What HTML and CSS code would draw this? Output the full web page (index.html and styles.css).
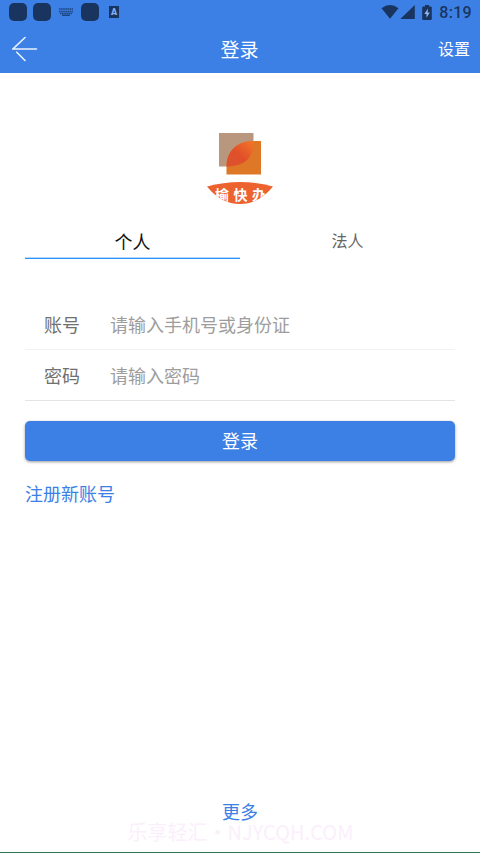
FILE: index.html
```html
<!DOCTYPE html>
<html lang="zh-CN">
<head>
<meta charset="utf-8">
<title>登录</title>
<link rel="stylesheet" href="styles.css">
</head>
<body>
<div class="screen">
  <header class="top">
    <div class="status">
      <div class="status-left">
        <span class="app"></span>
        <span class="app"></span>
        <svg class="keyboard" width="14" height="8" viewBox="0 0 14 8" stroke="#1c4680" stroke-width="1.5" fill="none"><path d="M0 1h14M0 3.4h14" stroke-dasharray="1.6 .5"/><path d="M1 5.4h12" stroke-dasharray="1.6 .5"/><path d="M3 7.3h8"/></svg>
        <span class="app"></span>
        <span class="ime"><b>A</b></span>
      </div>
      <div class="status-right">
        <svg width="18" height="14" viewBox="0 0 18 14"><path d="M0.500 3.300Q9-3.300 17.500 3.300L9 13.800Z" fill="#19355f"/></svg>
        <svg class="signal" width="15" height="14" viewBox="0 0 15 14"><path d="M14.800 0V14H0.300Z" fill="#19355f"/></svg>
        <svg class="battery" width="10" height="15" viewBox="0 0 10 15"><path d="M3 0h4v1.600h1.800q1 0 1 1V14q0 1-1 1H1.200q-1 0-1-1V2.600q0-1 1-1H3Z" fill="#19355f"/><path d="M6 3.600L2.300 8.900h2.200v3.900L7.800 7.500H5.600Z" fill="#8db5f2"/></svg>
        <span class="clock">8:19</span>
      </div>
    </div>
    <nav class="bar">
      <svg class="back" width="26" height="26" viewBox="0 0 26 26" fill="none" stroke="#e9f1ff" stroke-width="1.600" stroke-linecap="round"><path d="M13 1.500L1 13H24.500M4.800 16.200L13 24.500"/></svg>
      <h1>登录</h1>
      <span class="settings">设置</span>
    </nav>
  </header>
  <main>
    <svg class="logo" width="68" height="74" viewBox="0 0 68 74">
      <defs>
        <linearGradient id="leaf" x1="0" y1="1" x2="1" y2="0"><stop offset="0" stop-color="#d9532e"/><stop offset=".45" stop-color="#e04f2a"/><stop offset="1" stop-color="#f37826"/></linearGradient>
        <clipPath id="bowl"><path d="M1 56.500Q34 47.500 67 56.500Q53 74 34 74Q15 74 1 56.500Z"/></clipPath>
      </defs>
      <rect x="13" y="3" width="34.500" height="33.500" fill="#b9977f"/>
      <path d="M20.500 44.500V36C20.500 22 31 11 47.500 11H55V44.500Z" fill="#df7826"/>
      <path d="M20.500 36.500C20.500 21 31 11 47.500 11C48.500 28 38 36.500 20.500 36.500Z" fill="url(#leaf)"/>
      <g clip-path="url(#bowl)">
        <rect y="50" width="68" height="24" fill="#ed6330"/>
        <text class="logo-text" x="9" y="70">榆</text>
        <text class="logo-text" x="27.500" y="70">快</text>
        <text class="logo-text" x="46" y="70">办</text>
      </g>
    </svg>
    <div class="tabs">
      <div class="tab active">个人</div>
      <div class="tab">法人</div>
    </div>
    <form class="form">
      <label class="row"><span>账号</span><input type="text" placeholder="请输入手机号或身份证"></label>
      <label class="row last"><span>密码</span><input type="password" placeholder="请输入密码"></label>
      <button type="button" class="login">登录</button>
    </form>
    <a class="register">注册新账号</a>
  </main>
  <a class="more">更多</a>
  <div class="watermark">乐享轻汇・NJYCQH.COM</div>
</div>
</body>
</html>
```
FILE: styles.css
```css
* { box-sizing: border-box; }

body {
  margin: 0;
  background: #fff;
  font-family: "Noto Sans CJK SC", sans-serif;
  font-size: 18px;
}

.screen {
  position: relative;
  display: flex;
  flex-direction: column;
  height: 853px;
  overflow: hidden;
  border-bottom: 1px solid #2c7550;
}

.top {
  height: 73px;
  background: #3c80e6;
}

.status {
  display: flex;
  justify-content: space-between;
  height: 24px;
  padding: 0 8px 0 9px;
}

.status-left,
.status-right {
  display: flex;
  align-items: center;
}

.app {
  width: 18px;
  height: 18px;
  margin-right: 6px;
  border-radius: 5px;
  background: #19355f;
}

.keyboard { margin: 0 8px 0 2px; }

.ime {
  width: 10px;
  height: 12px;
  margin-left: 4px;
  background: #19355f;
  color: #83aef0;
  font: bold 9px/12px Roboto, sans-serif;
  text-align: center;
}

.ime b { display: block; }
.signal { margin-left: 1px; }
.battery { margin-left: 7px; }

.clock {
  margin-left: 7px;
  padding-top: 1px;
  color: #19355f;
  font: 500 16px/20px Roboto, sans-serif;
  letter-spacing: 0.3px;
}

.bar {
  display: grid;
  grid-template-columns: 1fr auto 1fr;
  align-items: center;
  height: 49px;
  padding: 0 10px;
  color: #fff;
}

.back { margin: 1px 0 0 2px; }

.bar h1 {
  margin: 0;
  font-size: 19px;
  font-weight: 400;
  line-height: 28px;
  padding-right: 1px;
}

.settings {
  justify-self: end;
  padding-bottom: 2px;
  font-size: 16px;
  line-height: 24px;
}

main {
  display: flex;
  flex: 1;
  flex-direction: column;
  padding: 57px 25px 0;
}

.logo { align-self: center; }

.logo-text {
  fill: #fff;
  font-size: 14px;
  font-weight: 700;
}

.tabs {
  display: flex;
  height: 55px;
}

.tab {
  flex: 1;
  padding-top: 23px;
  color: #666;
  font-size: 16px;
  line-height: 26px;
  text-align: center;
}

.tab.active {
  padding-top: 24px;
  border-bottom: 1px solid #2c93fa;
  box-shadow: inset 0 -1px #b4d8fd;
  color: #111;
  font-size: 18px;
}

.form {
  display: flex;
  flex-direction: column;
  padding-top: 40px;
}

.row {
  display: flex;
  align-items: center;
  height: 51px;
  padding-left: 19px;
  border-bottom: 1px solid #f2f2f2;
  color: #707070;
}

.row.last { border-bottom-color: #e4e4e4; }
.row span { width: 66px; }

.row input {
  flex: 1;
  min-width: 0;
  padding: 0;
  border: 0;
  outline: 0;
  background: none;
  font: inherit;
}

.row input::placeholder { color: #9d9d9d; }

.login {
  height: 40px;
  margin-top: 20px;
  padding: 0 0 2px;
  border: 0;
  border-radius: 5px;
  background: #3c80e6;
  box-shadow: 0 1px 3px rgba(0, 0, 0, 0.4);
  color: #fff;
  font: inherit;
}

.register {
  margin-top: 19px;
  color: #3c80e6;
  line-height: 26px;
}

.more {
  align-self: center;
  margin-bottom: 28px;
  color: #3c80e6;
  line-height: 26px;
}

.watermark {
  position: absolute;
  top: 817px;
  left: 0;
  width: 100%;
  padding-left: 1px;
  color: #fbeffb;
  font-size: 20px;
  line-height: 30px;
  text-align: center;
}
```
